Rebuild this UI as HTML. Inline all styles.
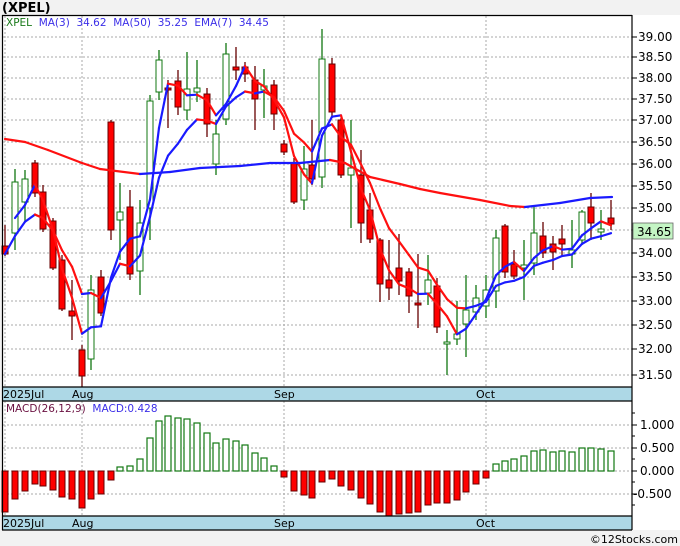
<!DOCTYPE html>
<html><head><meta charset="utf-8"><style>
html,body{margin:0;padding:0;background:#f2f2f2;}
body{width:680px;height:546px;overflow:hidden;position:relative;font-family:"DejaVu Sans","Liberation Sans",sans-serif;}
svg{position:absolute;left:0;top:0;}
</style></head><body>
<svg id="s" width="680" height="546" xmlns="http://www.w3.org/2000/svg" font-family="DejaVu Sans, Liberation Sans, sans-serif">
<rect x="0" y="0" width="680" height="546" fill="#f2f2f2"/>
<rect x="2" y="15" width="678" height="515" fill="#ffffff"/>
<text x="2" y="12" font-size="13" font-weight="bold" fill="#000">(XPEL)</text>
<g id="grid" stroke="#aaaaaa" stroke-width="1" stroke-dasharray="2,2"></g>
<g id="mac"></g>
<g id="cand"></g>
<g id="lines" fill="none" stroke-width="2.2" stroke-linejoin="round" stroke-linecap="round"></g>
<rect x="2" y="387" width="630" height="14" fill="#add8e6"/>
<rect x="2" y="516" width="630" height="14" fill="#add8e6"/>
<g stroke="#000" stroke-width="1.2">
<line x1="2" y1="15.5" x2="632" y2="15.5"/>
<line x1="2" y1="387" x2="632" y2="387"/>
<line x1="2" y1="401" x2="632" y2="401"/>
<line x1="2" y1="516" x2="632" y2="516"/>
<line x1="2" y1="530" x2="632" y2="530"/>
<line x1="2.5" y1="15" x2="2.5" y2="530"/>
<line x1="632" y1="15" x2="632" y2="530"/>
</g>
<g font-size="11" fill="#000">
<text x="3" y="398">2025Jul</text><text x="72" y="398">Aug</text><text x="274" y="398">Sep</text><text x="476" y="398">Oct</text>
<text x="3" y="527">2025Jul</text><text x="72" y="527">Aug</text><text x="274" y="527">Sep</text><text x="476" y="527">Oct</text>
</g>
<g id="ax" font-size="12" fill="#000"></g>
<rect x="633" y="223" width="40" height="16" fill="#c4f5c4" stroke="#666" stroke-width="0.8"/>
<text x="637" y="236" font-size="12" fill="#000">34.65</text>
<text x="6" y="26" font-size="10.5"><tspan fill="#1a7a1a">XPEL</tspan><tspan fill="#3b2ee8" xml:space="preserve">  MA(3)  34.62  MA(50)  35.25  EMA(7)  34.45</tspan></text>
<text x="6" y="412" font-size="10.5"><tspan fill="#6a1040">MACD(26,12,9)</tspan><tspan fill="#3b2ee8" xml:space="preserve">  MACD:0.428</tspan></text>
<text x="678" y="543" font-size="11" fill="#000" text-anchor="end">©12Stocks.com</text>
</svg>
<script>
var NS="http://www.w3.org/2000/svg";
function el(p,t,a){var e=document.createElementNS(NS,t);for(var k in a)e.setAttribute(k,a[k]);document.getElementById(p).appendChild(e);return e;}
// grid
var py=[[37,"39.00"],[57,"38.50"],[78,"38.00"],[99,"37.50"],[120,"37.00"],[142,"36.50"],[164,"36.00"],[186,"35.50"],[208,"35.00"],[230,""],[253,"34.00"],[277,"33.50"],[301,"33.00"],[325,"32.50"],[349,"32.00"],[375,"31.50"]];
py.forEach(function(p){el("grid","line",{x1:3,y1:p[0],x2:632,y2:p[0]});el("ax","line",{x1:632,y1:p[0],x2:637,y2:p[0],stroke:"#000"});if(p[1])el("ax","text",{x:638,y:p[0]+4}).textContent=p[1];});
var my=[[425,"1.000"],[448,"0.500"],[471,"0.000"],[494,"-0.500"]];
my.forEach(function(p){el("grid","line",{x1:3,y1:p[0],x2:632,y2:p[0]});el("ax","line",{x1:632,y1:p[0],x2:637,y2:p[0],stroke:"#000"});el("ax","text",{x:p[1][0]=="-"?633:640,y:p[0]+4}).textContent=p[1];});
[413,436,459,482,505].forEach(function(y){el("ax","line",{x1:632,y1:y,x2:635,y2:y,stroke:"#000"});});
[5,82,284,486].forEach(function(x){el("grid","line",{x1:x,y1:16,x2:x,y2:387});el("grid","line",{x1:x,y1:401,x2:x,y2:516});});
// candles: x, top, bottom, high, low, green?
var C=[[5,246,254,225,256,0],[15,182,233,169,250,1],[25,179,202,170,222,1],[35,163,193,160,197,0],[43,192,229,185,232,0],[53,221,268,218,270,0],[62,260,309,255,311,0],[72,311,316,280,340,0],[82,350,376,345,387,0],[91,290,359,275,370,1],[101,277,313,270,316,0],[111,122,230,120,240,0],[120,212,220,183,260,1],[130,207,274,190,280,0],[140,223,271,200,295,1],[150,101,208,95,240,1],[159,60,92,50,100,1],[168,88,90,80,128,0],[178,81,107,70,115,0],[187,89,110,52,120,1],[197,88,92,60,102,1],[207,94,124,88,137,0],[216,134,164,120,175,1],[226,54,119,43,125,1],[236,67,70,47,80,0],[245,67,74,62,82,0],[255,80,99,66,130,0],[264,86,90,69,118,1],[274,85,114,80,130,0],[284,144,152,140,155,0],[294,163,202,158,204,0],[304,169,200,146,210,1],[312,165,179,120,185,0],[322,59,177,29,188,1],[332,64,112,58,118,0],[341,120,175,118,178,0],[351,168,175,120,228,1],[361,175,223,150,243,0],[370,210,239,193,243,0],[380,240,284,238,302,0],[389,280,288,240,300,0],[399,268,281,234,295,0],[409,272,296,268,313,0],[418,303,305,254,328,0],[428,280,293,255,305,1],[437,286,327,278,333,0],[447,342,344,330,375,1],[457,334,339,301,345,1],[466,310,324,275,357,1],[476,298,312,285,320,1],[486,290,306,275,318,1],[496,238,291,230,308,1],[505,226,272,224,278,0],[514,264,276,250,279,0],[524,265,268,240,300,1],[534,233,263,205,275,1],[543,236,253,222,258,0],[553,244,252,236,270,0],[562,239,244,225,255,0],[572,250,254,220,268,1],[582,212,240,210,245,1],[591,207,223,193,240,0],[601,229,232,210,240,1],[611,218,224,200,230,0]];
C.forEach(function(c){var g=c[5];el("cand","line",{x1:c[0],y1:c[3],x2:c[0],y2:c[4],stroke:g?"#117711":"#660000","stroke-width":1.3});
el("cand","rect",{x:c[0]-3,y:c[1],width:6,height:Math.max(1.5,c[2]-c[1]),fill:g?"#ffffff":"#ff0000",stroke:g?"#117711":"#660000","stroke-width":1});});
// MACD
var M=[-41,-28,-20,-13,-15,-19,-26,-28,-37,-28,-23,-9,4,5,12,33,50,55,53,52,48,38,28,32,30,26,18,13,5,-6,-20,-24,-27,-11,-8,-15,-19,-27,-33,-41,-45,-43,-42,-41,-34,-32,-32,-29,-21,-13,-7,7,10,12,15,20,21,19,20,19,23,23,22,20];
C.forEach(function(c,i){var v=M[i];var x=c[0];if(v>=0)el("mac","rect",{x:x-3,y:471-v,width:6,height:v,fill:"#fff",stroke:"#117711","stroke-width":1.2});else el("mac","rect",{x:x-3,y:471,width:6,height:-v,fill:"#ff0000",stroke:"#660000","stroke-width":1});});
// lines
function seg(pts){for(var i=1;i<pts.length;i++){var a=pts[i-1],b=pts[i];el("lines","line",{x1:a[0],y1:a[1],x2:b[0],y2:b[1],stroke:b[1]>a[1]+0.2?"#ff1010":"#1a1aff"});}}
var cl=C.map(function(c){return c[5]?c[1]:c[2];});
var ma3=[],ema=[],e=cl[0];
for(var i=0;i<C.length;i++){if(i>=1){var s=0,n=0;for(var j=Math.max(0,i-2);j<=i;j++){s+=cl[j];n++;}ma3.push([C[i][0],s/n]);}
e=i==0?cl[0]:e+(cl[i]-e)*0.25;ema.push([C[i][0],e]);}
seg(ma3);seg(ema);
seg([[5,139],[25,142],[48,150],[82,163],[100,169],[140,174],[170,172],[200,168],[240,166],[270,163],[300,163],[330,160],[345,163],[370,177],[400,184],[420,189],[440,193],[480,200],[510,206],[525,207],[560,203],[590,198],[612,197]]);
</script>
</body></html>
